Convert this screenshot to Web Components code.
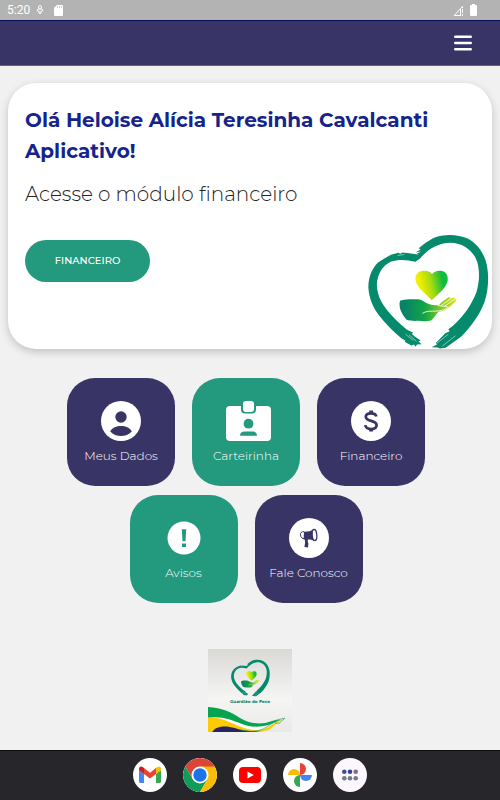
<!DOCTYPE html>
<html lang="pt-BR">
<head>
<meta charset="utf-8">
<meta name="viewport" content="width=device-width, initial-scale=1">
<title>Guardião do Povo</title>
<style>
  body {
    margin: 0;
    background-color: #f1f1f1;
    font-family: Montserrat, Inter, "Open Sans", sans-serif;
  }
</style>
</head>
<body>
<app-screen>
  <status-bar slot="top" time="5:20"></status-bar>
  <app-header slot="top"></app-header>

  <welcome-card action="Financeiro">
    <span slot="title">Olá Heloise Alícia Teresinha Cavalcanti Aplicativo!</span>
    <span slot="text">Acesse o módulo financeiro</span>
  </welcome-card>

  <menu-grid>
    <menu-tile icon="user">Meus Dados</menu-tile>
    <menu-tile icon="badge" color="green">Carteirinha</menu-tile>
    <menu-tile icon="money">Financeiro</menu-tile>
    <menu-tile icon="alert" color="green">Avisos</menu-tile>
    <menu-tile icon="megaphone">Fale Conosco</menu-tile>
  </menu-grid>

  <brand-banner>Guardião do Povo</brand-banner>

  <app-dock slot="bottom"></app-dock>
</app-screen>

<script>
class AppScreen extends HTMLElement {
  constructor() {
    super();
    this.attachShadow({ mode: "open" });
    this.shadowRoot.innerHTML = `
      <style>
        :host {
          display: flex;
          flex-direction: column;
          min-height: 100vh;
        }
        main {
          flex: 1;
          padding: 17px 8px 18px;
        }
      </style>
      <slot name="top"></slot>
      <main><slot></slot></main>
      <slot name="bottom"></slot>
    `;
  }
}
customElements.define("app-screen", AppScreen);

class StatusBar extends HTMLElement {
  constructor() {
    super();
    this.attachShadow({ mode: "open" });
    this.shadowRoot.innerHTML = `
      <style>
        :host {
          display: flex;
          align-items: center;
          box-sizing: border-box;
          height: 20px;
          padding: 0 23px 0 7px;
          background-color: #b3b3b3;
          color: #fff;
          font: 12px/20px Roboto, sans-serif;
        }
        svg { display: block; }
        .mic { margin-left: 6px; }
        .card { margin-left: 10px; }
        .signal { margin-left: auto; }
        .battery { margin-left: 6px; }
      </style>
      <span>${this.getAttribute("time")}</span>
      <svg class="mic" width="8" height="10" viewBox="0 0 8 10" fill="none" stroke="#fff">
        <path d="M2.7 1.2 4 .5l1.3.7v2L4 4.500 2.700 3.200zM1 5l3-1.500L7 5 4 9zM2.500 6l1.500 1.500L5.500 6"/>
      </svg>
      <svg class="card" width="9" height="11" viewBox="0 0 9 11">
        <path fill="#fff" d="M3 0h5a1 1 0 0 1 1 1v9a1 1 0 0 1-1 1H1a1 1 0 0 1-1-1V3z"/>
        <path stroke="#b3b3b3" stroke-width=".6" d="M3.500 1v2M5.500 1v2M7.500 1v2"/>
      </svg>
      <svg class="signal" width="11" height="11" viewBox="0 0 11 11">
        <path fill="none" stroke="#fff" d="M8 10.500H1.200L9.500 1.500V3M9.500 4v4M9.500 9v2M7.500 4v6"/>
      </svg>
      <svg class="battery" width="7" height="12" viewBox="0 0 7 12">
        <path fill="#fff" d="M2 0h3v1h1a1 1 0 0 1 1 1v9a1 1 0 0 1-1 1H1a1 1 0 0 1-1-1V2a1 1 0 0 1 1-1h1z"/>
      </svg>
    `;
  }
}
customElements.define("status-bar", StatusBar);

class AppHeader extends HTMLElement {
  constructor() {
    super();
    this.attachShadow({ mode: "open" });
    this.shadowRoot.innerHTML = `
      <style>
        :host {
          display: flex;
          align-items: center;
          justify-content: flex-end;
          box-sizing: border-box;
          height: 46px;
          padding: 0 20px;
          background-color: #393466;
          border-top: 1px solid #080c5c;
          border-bottom: 1px solid #625c86;
        }
        button {
          padding: 8px;
          border: 0;
          background: none;
          cursor: pointer;
        }
        svg { display: block; }
      </style>
      <button type="button" aria-label="Abrir menu">
        <svg width="18" height="16" viewBox="0 0 18 16" stroke="#fff" stroke-width="2.6" stroke-linecap="round">
          <path d="M1.3 1.8h15.4M1.3 8h15.4M1.3 14.2h15.4"/>
        </svg>
      </button>
    `;
  }
}
customElements.define("app-header", AppHeader);

// brushed heart with the open hand, shared by the card and the banner
class HeartLogo extends HTMLElement {
  constructor() {
    super();
    this.attachShadow({ mode: "open" });
    this.shadowRoot.innerHTML = `
      <style>
        :host { display: block; }
        svg { display: block; width: 100%; height: 100%; }
      </style>
      <svg viewBox="54 44 363 344" aria-hidden="true">
        <defs>
          <linearGradient id="heart" x1="0" y1=".6" x2="1" y2=".4">
            <stop offset=".15" stop-color="#f4ee00"/>
            <stop offset=".5" stop-color="#a5db12"/>
            <stop offset=".85" stop-color="#12bd3c"/>
          </linearGradient>
          <linearGradient id="hand" x1="0" y1="0" x2="1" y2="0">
            <stop offset=".1" stop-color="#078467"/>
            <stop offset=".45" stop-color="#12a744"/>
            <stop offset=".7" stop-color="#7fc529"/>
            <stop offset="1" stop-color="#e8e800"/>
          </linearGradient>
        </defs>
        <g fill="#058a6b">
          <path d="M197 127 208 117 214 106 198 104 178 101 157 99 151 103 145 100 123 106 103 117 84 129C66 147 55 172 55 204C57 235 68 263 88 289C108 315 132 339 155 357L166 363 164 367 184 378 192 375 197 382 201 375 215 374 205 366 212 363 194 351 185 343 190 340 170 330C140 305 112 278 94 246C83 225 78 202 82 182C88 155 101 137 122 127C146 118 172 121 197 127Z"/>
          <path d="M197 98 214 96 201 102 208 107 198 111 206 113 196 126 210 117C233 90 265 70 301 70C338 70 370 93 382 128C390 157 388 190 379 219C365 255 342 289 309 319L295 329 299 335 286 341 270 358 258 370 261 375 245 383 263 384 270 387 287 385 309 369 334 351C365 319 391 283 404 246C414 217 417 178 412 145C406 105 384 74 353 57C321 43 280 43 249 56L227 70 206 86 212 90Z"/>
        </g>
        <path fill="none" stroke="#fff" stroke-width="1.5" d="M166 344l24 19M177 346l22 19M261 371l34-27M277 380l39-31M143 108l20-3"/>
        <path fill="url(#heart)" d="M245 242C227 222 202 207 197 184C193 161 211 151 224 154C235 154 242 158 246 164C252 156 262 152 273 154C288 156 295 168 293 184C289 205 264 225 245 242Z"/>
        <path fill="url(#hand)" d="M151 243C165 238 188 239 205 239C215 240 219 244 228 250C239 256 253 259 268 256L274 249 294 234 302 233 300 238 312 234 315 238 320 239 316 247 293 267C286 273 275 275 266 277C258 284 253 295 245 302C235 306 218 306 205 304C192 305 178 304 169 300C161 291 154 280 150 267C149 259 147 249 151 243Z"/>
        <path fill="none" stroke="#fff" stroke-width="2.5" stroke-linecap="round" d="M218 281C228 274 243 275 258 275C275 274 288 270 295 263M264 258C278 261 288 259 292 262M274 258l28-20M285 259l29-20"/>
      </svg>
    `;
  }
}
customElements.define("heart-logo", HeartLogo);

class WelcomeCard extends HTMLElement {
  constructor() {
    super();
    this.attachShadow({ mode: "open" });
    this.shadowRoot.innerHTML = `
      <style>
        :host {
          display: grid;
          box-sizing: border-box;
          min-height: 266px;
          border-radius: 28px;
          background-color: #fff;
          box-shadow: 0 3px 8px rgba(0, 0, 0, 0.2);
          overflow: hidden;
        }
        .content, heart-logo { grid-area: 1 / 1; }
        .content { padding: 22px 17px; }
        h1 {
          margin: 0 0 12px;
          color: #14248c;
          font-size: 20px;
          line-height: 31px;
          font-weight: 700;
        }
        p {
          margin: 0 0 31px;
          color: #222;
          font-size: 20px;
          line-height: 30px;
          font-weight: 300;
        }
        button {
          height: 42px;
          min-width: 125px;
          padding: 0 24px;
          border: 0;
          border-radius: 21px;
          background-color: #23997d;
          color: #fff;
          font: 500 10px/16px Montserrat, Inter, sans-serif;
          text-transform: uppercase;
          cursor: pointer;
        }
        heart-logo {
          align-self: end;
          justify-self: end;
          width: 121px;
          height: 115px;
          margin-right: 3px;
        }
      </style>
      <div class="content">
        <h1><slot name="title"></slot></h1>
        <p><slot name="text"></slot></p>
        <button type="button">${this.getAttribute("action")}</button>
      </div>
      <heart-logo></heart-logo>
    `;
  }
}
customElements.define("welcome-card", WelcomeCard);

class MenuGrid extends HTMLElement {
  constructor() {
    super();
    this.attachShadow({ mode: "open" });
    this.shadowRoot.innerHTML = `
      <style>
        :host {
          display: block;
          padding-right: 8px;
        }
        nav {
          display: flex;
          flex-wrap: wrap;
          justify-content: center;
          gap: 9px 17px;
          max-width: 400px;
          margin: 29px auto 0;
        }
      </style>
      <nav><slot></slot></nav>
    `;
  }
}
customElements.define("menu-grid", MenuGrid);

const icons = {
  user: `<svg width="40" height="40" viewBox="0 0 40 40">
    <circle cx="20" cy="20" r="20" fill="#fff"/>
    <circle cx="20" cy="16" r="5.7"/>
    <path d="M9.200 30.500c2-4 6.300-5.500 10.800-5.500s8.800 1.500 10.800 5.500C28 33.500 24 35 20 35s-8-1.500-10.800-4.500z"/>
  </svg>`,
  badge: `<svg width="50" height="40" viewBox="-5 0 50 40">
    <rect y="5" width="45" height="35" rx="4" fill="#fff"/>
    <rect x="15" y="-2" width="15" height="14.500" rx="4"/>
    <rect x="17" width="11" height="11" rx="3" fill="#fff"/>
    <circle cx="22.500" cy="22.700" r="4.900"/>
    <path d="M14 34.700c0-3 2-4.200 4.500-4.200h8c2.500 0 4.500 1.200 4.500 4.200z"/>
  </svg>`,
  money: `<svg width="40" height="40" viewBox="0 0 40 40">
    <circle cx="20" cy="20" r="20" fill="#fff"/>
    <path fill="none" stroke="currentColor" stroke-width="2.700" d="M25.300 15.500c-.3-2.200-2.300-3.200-5.300-3.200-3.100 0-5.200 1.200-5.200 3.500 0 2.500 2.200 3.300 5.300 4.100 3.400.9 5.500 1.700 5.500 4.400 0 2.300-2.200 3.700-5.400 3.700-3.400 0-5.600-1.400-5.900-3.900"/>
    <path d="M18.200 9.500h3.800v3h-3.800zM18.200 27.500h3.800v3h-3.800z"/>
  </svg>`,
  alert: `<svg width="34" height="40" viewBox="0 0 34 40">
    <circle cx="17" cy="20" r="16.500" fill="#fff"/>
    <path d="M14.800 11.300h4.400l-.7 12h-3zM15 25.400h4v3.600h-4z"/>
  </svg>`,
  megaphone: `<svg width="40" height="40" viewBox="0 0 40 40">
    <circle cx="20" cy="20" r="20" fill="#fff"/>
    <path d="M15 13.700c4.500 0 7-.5 10-2.700 1.400.7 2.200 3 2.200 5.500s-.8 5.300-2.200 6.500c-2-1.200-4-1.600-6.200-1.500v2.800l.6 1-.4 4.300-3.600-.6.7-4.200-.3-3.300h-1.200z"/>
    <ellipse cx="25.500" cy="17" rx="2.300" ry="5.500" fill="#fff" stroke="currentColor" stroke-width="1.300" transform="rotate(-5 25.500 17)"/>
    <path fill="none" stroke="currentColor" stroke-width="1" d="M15 13.700c-2.700-.2-3.700 1.200-3.500 3.200.2 2.300 1.600 4.100 4.200 3.700"/>
  </svg>`,
};

class MenuTile extends HTMLElement {
  constructor() {
    super();
    this.attachShadow({ mode: "open" });
    this.render();
  }

  render() {
    this.shadowRoot.innerHTML = `
      <style>
        :host {
          display: block;
          --tile: #393466;
        }
        :host([color="green"]) { --tile: #23997d; }
        a {
          display: flex;
          flex-direction: column;
          align-items: center;
          box-sizing: border-box;
          width: 108px;
          height: 108px;
          padding-top: 23px;
          border-radius: 28px;
          background-color: var(--tile);
          color: #fff;
          font-size: 12px;
          line-height: 18px;
          font-weight: 300;
          text-decoration: none;
          white-space: nowrap;
        }
        svg {
          display: block;
          margin-bottom: 6px;
          color: var(--tile);
          fill: currentColor;
        }
      </style>
      <a href="#">${icons[this.getAttribute("icon")]}<slot></slot></a>
    `;
  }
}
customElements.define("menu-tile", MenuTile);

class BrandBanner extends HTMLElement {
  constructor() {
    super();
    this.attachShadow({ mode: "open" });
    this.shadowRoot.innerHTML = `
      <style>
        :host {
          display: flex;
          flex-direction: column;
          align-items: center;
          width: 84px;
          height: 83px;
          margin: 46px auto 0;
          background: linear-gradient(#dad9d6, #f5f5f4 60%, #e9e9e7);
          color: #087a60;
          font: 900 4px/8px "DejaVu Sans", sans-serif;
          white-space: nowrap;
        }
        heart-logo {
          width: 39px;
          height: 38px;
          margin: 10px 0 1px;
        }
        .flag {
          display: block;
          width: 100%;
          margin-top: auto;
        }
      </style>
      <heart-logo></heart-logo>
      <slot></slot>
      <svg class="flag" viewBox="0 0 252 76" aria-hidden="true">
        <path fill="#fff" d="M0 30C38 26 69 36 100 50C126 60 150 58 172 52L200 46 172 66 150 72H0z"/>
        <path fill="#05a550" d="M0 0C42 2 68 15 96 33C120 48 148 52 172 48L205 38 220 39 181 54C150 62 125 60 100 50C70 38 40 26 0 32z"/>
        <path fill="#fdca06" d="M0 32C36 30 62 44 91 57C115 68 149 72 167 67C181 62 194 51 217 40L183 69 148 76H0z"/>
        <path fill="#282460" d="M12 76C22 56 54 55 80 63C106 72 126 74 157 72L137 76z"/>
        <path fill="none" stroke="#0a9d62" stroke-width="2" d="M95 68c34 9 61 5 76-5l39-25 20-4-15 14-14 1"/>
        <path fill="none" stroke="#f4c52b" stroke-width="2" d="M201 48l11-9 10 4-13 4"/>
      </svg>
    `;
  }
}
customElements.define("brand-banner", BrandBanner);

class AppDock extends HTMLElement {
  constructor() {
    super();
    this.attachShadow({ mode: "open" });
    this.shadowRoot.innerHTML = `
      <style>
        :host {
          display: flex;
          align-items: center;
          justify-content: center;
          gap: 16px;
          box-sizing: border-box;
          height: 50px;
          padding-bottom: 1px;
          background-color: #27262b;
          border-top: 1px solid #0c0c0e;
        }
        button {
          width: 34px;
          height: 34px;
          padding: 0;
          border: 0;
          border-radius: 50%;
          background-color: #fff;
          overflow: hidden;
          cursor: pointer;
        }
        button:last-child { background-color: #fcf7fe; }
        svg { display: block; }
      </style>
      <button type="button" aria-label="Gmail">
        <svg width="34" height="34" viewBox="0 0 34 34">
          <path fill="#4285f4" d="M6 12l5 4v9H7.500A1.500 1.500 0 0 1 6 23.500z"/>
          <path fill="#34a853" d="M23 16l5-4v11.500a1.500 1.500 0 0 1-1.500 1.500H23z"/>
          <path fill="#c5221f" d="M6 11c0-2.500 2.500-3 4-1.800l1 .8v6l-5-3.700z"/>
          <path fill="#ea4335" d="M11 10l6 4.700L23 10v6l-6 4.600L11 16z"/>
          <path fill="#fbbc04" d="M23 10l1-.8c1.500-1.200 4-.7 4 1.800v1.300L23 16z"/>
        </svg>
      </button>
      <button type="button" aria-label="Chrome">
        <svg width="34" height="34" viewBox="0 0 34 34">
          <path fill="#db4437" d="M17 17H32.500L31.700 8.500A17 17 0 0 0 2.300 8.500L9.600 21z"/>
          <path fill="#0f9d58" d="M2.300 8.500A17 17 0 0 0 17 34l7.400-12.700H9.800z"/>
          <path fill="#fbbc05" d="M17 34A17 17 0 0 0 31.700 8.500H17l7.400 12.800z"/>
          <circle cx="17" cy="17" r="8.500" fill="#fff"/>
          <circle cx="17" cy="17" r="6.700" fill="#1a73e8"/>
        </svg>
      </button>
      <button type="button" aria-label="YouTube">
        <svg width="34" height="34" viewBox="0 0 34 34">
          <rect x="6" y="9" width="22" height="16" rx="4" fill="#f00"/>
          <path fill="#fff" d="M14.500 13.500v7l6.300-3.500z"/>
        </svg>
      </button>
      <button type="button" aria-label="Google Fotos">
        <svg width="34" height="34" viewBox="0 0 34 34">
          <path fill="#ea4335" d="M17 5a6 6 0 0 1 0 12z"/>
          <path fill="#4285f4" d="M29 17a6 6 0 0 1-12 0z"/>
          <path fill="#34a853" d="M17 29a6 6 0 0 1 0-12z"/>
          <path fill="#fbbc04" d="M5 17a6 6 0 0 1 12 0z"/>
        </svg>
      </button>
      <button type="button" aria-label="Todos os aplicativos">
        <svg width="34" height="34" viewBox="0 0 34 34">
          <g fill="#435087"><circle cx="11.300" cy="13.700" r="2.300"/><circle cx="17" cy="13.700" r="2.300" fill="#304591"/><circle cx="22.700" cy="13.700" r="2.300" fill="#8b6489"/></g>
          <g fill="#75798a"><circle cx="11.300" cy="20.300" r="2.300"/><circle cx="17" cy="20.300" r="2.300"/><circle cx="22.700" cy="20.300" r="2.300"/></g>
        </svg>
      </button>
    `;
  }
}
customElements.define("app-dock", AppDock);
</script>
</body>
</html>
